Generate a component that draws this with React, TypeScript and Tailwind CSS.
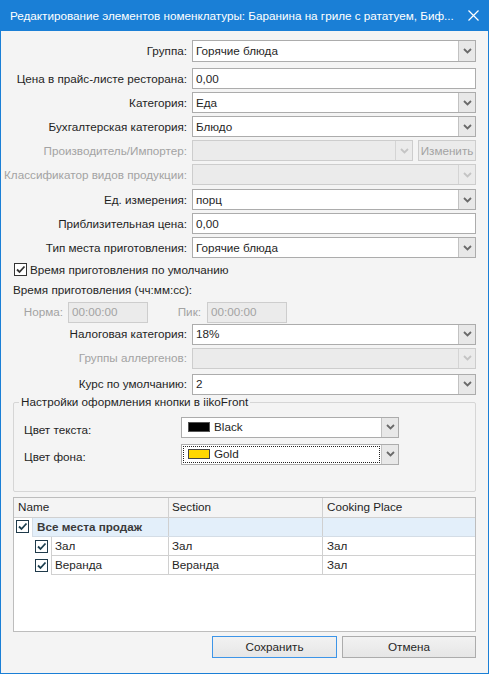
import React from 'react';

const Chevron: React.FC<{ disabled?: boolean }> = ({ disabled }) => (
  <svg width="9" height="6" viewBox="0 0 9 6">
    <path d="M1 1 L4.5 4.5 L8 1" fill="none" stroke={disabled ? '#c4c4c4' : '#6a6a6a'} strokeWidth="1.8" />
  </svg>
);

const Check: React.FC<{ color?: string }> = ({ color = '#333' }) => (
  <svg width="11" height="11" viewBox="0 0 11 11">
    <path d="M2 5.5 L4.5 8 L9.5 2.5" fill="none" stroke={color} strokeWidth="1.8" />
  </svg>
);

interface ComboProps {
  value?: string;
  disabled?: boolean;
  tall?: boolean;
  children?: React.ReactNode;
  focused?: boolean;
}

const Combo: React.FC<ComboProps> = ({ value, disabled, tall, children, focused }) => (
  <div
    className={`flex ${tall ? 'h-[22px]' : 'h-[21px]'} border ${
      disabled ? 'border-[#cdcdcd] bg-[#ebebeb]' : 'border-[#acacac] bg-white'
    }`}
  >
    <div className="flex-1 flex p-[1px] min-w-0">
      <div
        className={`flex-1 flex items-center pl-[2px] whitespace-nowrap overflow-hidden ${
          focused ? 'border border-dotted border-[#222]' : ''
        }`}
      >
        {children ?? value}
      </div>
    </div>
    <div
      className={`w-[17px] flex items-center justify-center border-l ${
        disabled ? 'border-[#d4d4d4] bg-[#ebebeb]' : 'border-[#c2c2c2] bg-[#e8e8e8]'
      }`}
    >
      <Chevron disabled={disabled} />
    </div>
  </div>
);

const TextField: React.FC<{ value: string; disabled?: boolean; className?: string }> = ({ value, disabled, className }) => (
  <div
    className={`flex items-center h-[21px] pl-[3px] border ${
      disabled ? 'border-[#cdcdcd] bg-[#ebebeb] text-[#a3a3a3]' : 'border-[#acacac] bg-white'
    } ${className ?? ''}`}
  >
    {value}
  </div>
);

const Row: React.FC<{ label: string; disabled?: boolean; children: React.ReactNode; className?: string }> = ({
  label,
  disabled,
  children,
  className,
}) => (
  <div className={`flex items-center ${className ?? ''}`}>
    <div
      className={`w-[175px] shrink-0 flex justify-end whitespace-nowrap pr-[1px] ${
        disabled ? 'text-[#a3a3a3]' : ''
      }`}
    >
      {label}
    </div>
    <div className="flex-1 ml-[4px]">{children}</div>
  </div>
);

const GridCheck: React.FC = () => (
  <div className="w-[13px] h-[13px] border border-[#1f3a4a] bg-white flex items-center justify-center">
    <Check color="#1c3f4f" />
  </div>
);

export default function App() {
  return (
    <div className="w-[489px] h-[674px] flex flex-col bg-[#f4f4f4] border border-t-0 border-[#1a7fd6] text-[11.7px] leading-none text-[#1f1f1f] font-['Segoe_UI','Liberation_Sans',sans-serif] overflow-hidden">
      {/* title bar */}
      <div className="h-[31px] -mx-[1px] bg-[#1a7fd6] flex items-center pl-[10px] pr-[8px] text-white shrink-0">
        <div className="flex-1 whitespace-nowrap">
          Редактирование элементов номенклатуры: Баранина на гриле с рататуем, Биф...
        </div>
        <svg width="11" height="11" viewBox="0 0 11 11" className="mr-[2px]">
          <path d="M0.5 0.5 L10.5 10.5 M10.5 0.5 L0.5 10.5" stroke="#fff" strokeWidth="1.2" />
        </svg>
      </div>

      <div className="flex-1 flex flex-col px-[12px] pt-[9px]">
        <Row label="Группа:">
          <Combo value="Горячие блюда" tall />
        </Row>
        <div className="flex flex-col gap-[3px] mt-[6px]">
          <Row label="Цена в прайс-листе ресторана:">
            <TextField value="0,00" />
          </Row>
          <Row label="Категория:">
            <Combo value="Еда" />
          </Row>
          <Row label="Бухгалтерская категория:">
            <Combo value="Блюдо" />
          </Row>
          <Row label="Производитель/Импортер:" disabled>
            <div className="flex gap-[5px]">
              <div className="flex-1">
                <Combo disabled />
              </div>
              <div className="w-[58px] h-[21px] border border-[#cdcdcd] bg-[#ebebeb] text-[#a3a3a3] flex items-center justify-center">
                Изменить
              </div>
            </div>
          </Row>
          <Row label="Классификатор видов продукции:" disabled>
            <Combo disabled />
          </Row>
          <Row label="Ед. измерения:" className="mt-[1px]">
            <Combo value="порц" />
          </Row>
          <Row label="Приблизительная цена:">
            <TextField value="0,00" />
          </Row>
          <Row label="Тип места приготовления:">
            <Combo value="Горячие блюда" />
          </Row>
        </div>

        <div className="flex items-center mt-[5px] ml-[1px]">
          <div className="w-[13px] h-[13px] border border-[#333] bg-white flex items-center justify-center">
            <Check />
          </div>
          <span className="ml-[3px]">Время приготовления по умолчанию</span>
        </div>
        <div className="mt-[8px]">Время приготовления (чч:мм:сс):</div>

        <div className="flex items-center mt-[6px] text-[#a3a3a3]">
          <div className="w-[50px] text-right">Норма:</div>
          <TextField value="00:00:00" disabled className="ml-[5px] w-[80px]" />
          <div className="w-[53px] text-right">Пик:</div>
          <TextField value="00:00:00" disabled className="ml-[6px] w-[80px]" />
        </div>

        <div className="flex flex-col gap-[3px] mt-[1px]">
          <Row label="Налоговая категория:">
            <Combo value="18%" />
          </Row>
          <Row label="Группы аллергенов:" disabled>
            <Combo disabled />
          </Row>
          <Row label="Курс по умолчанию:" className="mt-[2px]">
            <Combo value="2" />
          </Row>
        </div>

        {/* group box */}
        <div className="relative mt-[7px] h-[90px] border border-[#d6d6d6] rounded-[2px]">
          <div className="absolute -top-[7px] left-[5px] px-[2px] bg-[#f4f4f4]">Настройки оформления кнопки в iikoFront</div>
          <div className="flex flex-col gap-[6px] pt-[14px] pr-[76px]">
            <div className="flex items-center">
              <div className="w-[167px] pl-[10px] pt-[6px]">Цвет текста:</div>
              <div className="flex-1">
                <Combo>
                  <span className="w-[22px] h-[10px] bg-black border border-[#555] mr-[4px] ml-[3px]" />
                  Black
                </Combo>
              </div>
            </div>
            <div className="flex items-center">
              <div className="w-[167px] pl-[10px] pt-[6px]">Цвет фона:</div>
              <div className="flex-1">
                <Combo focused>
                  <span className="w-[22px] h-[10px] bg-[#ffd700] border border-[#444] mr-[4px] ml-[2px]" />
                  Gold
                </Combo>
              </div>
            </div>
          </div>
        </div>

        {/* grid */}
        <div className="mt-[5px] h-[135px] border border-[#bdbdbd] bg-white flex flex-col">
          <div className="flex h-[20px] bg-[#f4f4f4] border-b border-[#d0d0d0] shrink-0">
            <div className="w-[155px] pl-[4px] flex items-center border-r border-[#d0d0d0]">Name</div>
            <div className="w-[154px] pl-[3px] flex items-center border-r border-[#d0d0d0]">Section</div>
            <div className="flex-1 pl-[4px] flex items-center">Cooking Place</div>
          </div>
          <div className="flex h-[19px]">
            <div className="w-[18px] flex items-center pl-[2px] pb-[1px]">
              <GridCheck />
            </div>
            <div className="flex-1 flex bg-[#e3effa] border-b border-l border-[#d4dde6]">
              <div className="w-[136px] pl-[4px] flex items-center font-bold text-[#3a3a3a] border-r border-[#d0d0d0]">
                Все места продаж
              </div>
              <div className="w-[154px] border-r border-[#d0d0d0]" />
              <div className="flex-1" />
            </div>
          </div>
          {[
            ['Зал', 'Зал', 'Зал'],
            ['Веранда', 'Веранда', 'Зал'],
          ].map((r) => (
            <div key={r[0]} className="flex h-[19px]">
              <div className="w-[37px] flex items-center pl-[21px]">
                <GridCheck />
              </div>
              <div className="flex-1 flex border-b border-l border-[#d0d0d0]">
                <div className="w-[117px] pl-[3px] flex items-center border-r border-[#d0d0d0]">{r[0]}</div>
                <div className="w-[154px] pl-[3px] flex items-center border-r border-[#d0d0d0]">{r[1]}</div>
                <div className="flex-1 pl-[4px] flex items-center">{r[2]}</div>
              </div>
            </div>
          ))}
        </div>

        <div className="flex justify-end gap-[5px] mt-[4px]">
          <button
            type="button"
            className="w-[125px] h-[22px] border border-[#3d95e8] bg-gradient-to-b from-[#f2f2f2] to-[#e6e6e6] text-[#262626]"
          >
            Сохранить
          </button>
          <button
            type="button"
            className="w-[134px] h-[22px] border border-[#acacac] bg-gradient-to-b from-[#f2f2f2] to-[#e6e6e6] text-[#262626]"
          >
            Отмена
          </button>
        </div>
      </div>
    </div>
  );
}
